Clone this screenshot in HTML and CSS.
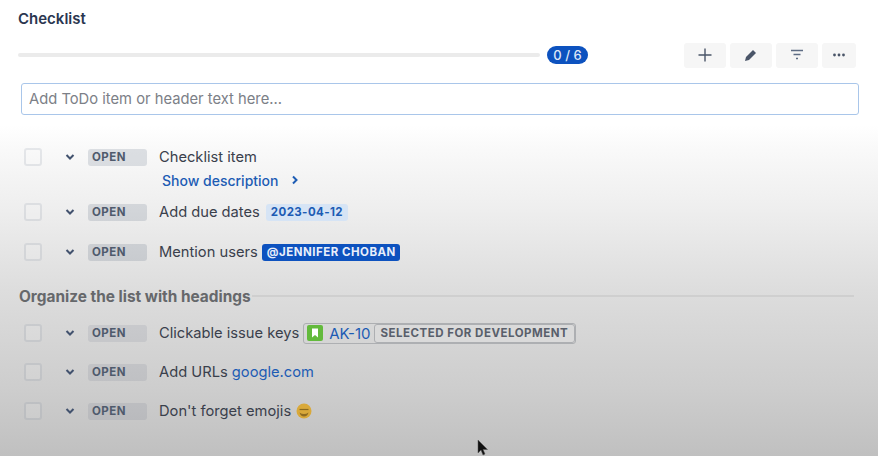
FILE: index.html
```html
<!DOCTYPE html>
<html lang="en">
<head>
<meta charset="utf-8">
<title>Checklist</title>
<link rel="stylesheet" href="styles.css">
</head>
<body>
<main class="panel">
  <h1 class="title">Checklist</h1>
  <div class="toolbar">
    <div class="progress"></div>
    <span class="count">0 / 6</span>
    <div class="actions">
      <button class="act wide"><svg width="16" height="16" viewBox="0 0 16 16"><path d="M8 1.500v13M1.500 8h13" stroke="#4a5568" stroke-width="1.400" fill="none"/></svg></button>
      <button class="act wide"><svg width="16" height="16" viewBox="0 0 16 16"><path d="M2 14l1-4 7-7 3 3-7 7z" fill="#4a5568"/></svg></button>
      <button class="act wide"><svg width="16" height="16" viewBox="0 0 16 16"><path d="M2 3.500h12M4.500 7.500h7M7 11.500h2" stroke="#5e6c84" stroke-width="1.400" fill="none"/></svg></button>
      <button class="act"><svg width="16" height="16" viewBox="0 0 16 16"><circle cx="3.500" cy="8" r="1.400" fill="#4a5568"/><circle cx="8" cy="8" r="1.400" fill="#4a5568"/><circle cx="12.500" cy="8" r="1.400" fill="#4a5568"/></svg></button>
    </div>
  </div>
  <div class="add"><span class="placeholder">Add ToDo item or header text here...</span></div>

  <div class="item first">
    <span class="check"></span>
    <svg class="chev" width="10" height="8" viewBox="0 0 10 8"><path d="M1.500 2l3.500 3.500L8.500 2" stroke="#42526e" stroke-width="2" fill="none"/></svg>
    <span class="status">OPEN</span>
    <span class="text">Checklist item</span>
  </div>
  <div class="desc"><span>Show description</span><svg width="8" height="10" viewBox="0 0 8 10"><path d="M2 1.500L5.500 5 2 8.500" stroke="#1d5cb4" stroke-width="2" fill="none"/></svg></div>

  <div class="item due">
    <span class="check"></span>
    <svg class="chev" width="10" height="8" viewBox="0 0 10 8"><path d="M1.500 2l3.500 3.500L8.500 2" stroke="#42526e" stroke-width="2" fill="none"/></svg>
    <span class="status">OPEN</span>
    <span class="text">Add due dates</span>
    <span class="date">2023-04-12</span>
  </div>
  <div class="item mention-row">
    <span class="check"></span>
    <svg class="chev" width="10" height="8" viewBox="0 0 10 8"><path d="M1.500 2l3.500 3.500L8.500 2" stroke="#42526e" stroke-width="2" fill="none"/></svg>
    <span class="status">OPEN</span>
    <span class="text">Mention users</span>
    <span class="mention">@JENNIFER CHOBAN</span>
  </div>

  <div class="heading"><span>Organize the list with headings</span><i class="rule"></i></div>

  <div class="item after-heading low">
    <span class="check"></span>
    <svg class="chev" width="10" height="8" viewBox="0 0 10 8"><path d="M1.500 2l3.500 3.500L8.500 2" stroke="#42526e" stroke-width="2" fill="none"/></svg>
    <span class="status">OPEN</span>
    <span class="text">Clickable issue keys</span>
    <span class="issue">
      <svg class="issue-icon" width="16" height="16" viewBox="0 0 16 16"><rect width="16" height="16" rx="2" fill="#63ba3c"/><path d="M5 3.500h6v9l-3-2.500-3 2.500z" fill="#fff"/></svg>
      <span class="key">AK-10</span>
      <span class="lozenge">SELECTED FOR DEVELOPMENT</span>
    </span>
  </div>
  <div class="item next low">
    <span class="check"></span>
    <svg class="chev" width="10" height="8" viewBox="0 0 10 8"><path d="M1.500 2l3.500 3.500L8.500 2" stroke="#42526e" stroke-width="2" fill="none"/></svg>
    <span class="status">OPEN</span>
    <span class="text">Add URLs <a class="link">google.com</a></span>
  </div>
  <div class="item next low">
    <span class="check"></span>
    <svg class="chev" width="10" height="8" viewBox="0 0 10 8"><path d="M1.500 2l3.500 3.500L8.500 2" stroke="#42526e" stroke-width="2" fill="none"/></svg>
    <span class="status">OPEN</span>
    <span class="text">Don't forget emojis</span>
    <svg class="emoji" width="16" height="16" viewBox="0 0 16 16"><circle cx="8" cy="8" r="7.500" fill="#d9a93a"/><path d="M3.500 6.500h9" stroke="#8a6a20" stroke-width="1.200"/><path d="M3.500 9.500q4.500 3 9 0q-1 4-4.500 4t-4.500-4z" fill="#8f6c22"/></svg>
  </div>
  <svg class="cursor" width="12" height="18" viewBox="0 0 12 18"><path d="M1 1v13l3-3 2 5 2-1-2-4.500h4.500z" fill="#111" stroke="#555" stroke-width=".5"/></svg>
</main>
</body>
</html>
```

FILE: styles.css
```css
html, body {
  margin: 0;
  height: 100%;
}
body {
  font-family: "Inter", "Liberation Sans", sans-serif;
  overflow: hidden;
}
.panel {
  position: relative;
  box-sizing: border-box;
  width: 878px;
  height: 456px;
  padding: 10px 19px 0 18px;
  background: linear-gradient(to bottom, #fff 0, #fff 125px, #f9f9f9 150px, #eeeeee 210px, #dddddd 290px, #cdcdcd 390px, #c0c0c0 456px);
  color: #3a404c;
}
.title {
  margin: 0;
  font-size: 15px;
  line-height: 17px;
  font-weight: 600;
  color: #2a3650;
}
.toolbar {
  display: flex;
  align-items: center;
  height: 26px;
  margin-top: 15px;
}
.progress {
  width: 522px;
  height: 4px;
  border-radius: 2px;
  background: #ebebeb;
}
.count {
  box-sizing: border-box;
  width: 41px;
  height: 18px;
  margin-left: 7px;
  border-radius: 9px;
  background: #0d52bf;
  color: #dfe8f7;
  font-size: 13px;
  font-weight: 500;
  line-height: 18px;
  text-align: center;
}
.actions {
  display: flex;
  gap: 4px;
  margin-left: 96px;
}
.act {
  display: flex;
  align-items: center;
  justify-content: center;
  width: 34px;
  height: 25px;
  padding: 0;
  border: 0;
  border-radius: 3px;
  background: #f6f6f6;
}
.act.wide {
  width: 42px;
}
.add {
  display: flex;
  align-items: center;
  box-sizing: border-box;
  width: 838px;
  height: 32px;
  margin: 15px 0 0 3px;
  padding-left: 7px;
  border: 1px solid #a9c6ea;
  border-radius: 3px;
  background: #fff;
}
.placeholder {
  font-size: 14.750px;
  color: #7c8087;
}
.item {
  display: flex;
  align-items: center;
  height: 18px;
}
.item.first {
  margin-top: 33px;
}
.item.due {
  margin-top: 14px;
}
.item.mention-row {
  margin-top: 22px;
}
.item.next {
  margin-top: 21px;
}
.item.after-heading {
  margin-top: 19px;
}
.check {
  box-sizing: border-box;
  width: 18px;
  height: 18px;
  margin-left: 6px;
  border: 2px solid rgba(9, 30, 66, 0.09);
  border-radius: 3px;
  background: rgba(255, 255, 255, 0.1);
}
.chev {
  margin-left: 23px;
}
.status {
  box-sizing: border-box;
  width: 59px;
  height: 17px;
  margin-left: 13px;
  padding-left: 4px;
  border-radius: 3px;
  background: rgba(9, 30, 66, 0.12);
  color: #4f5a6c;
  font-size: 11.500px;
  font-weight: 700;
  letter-spacing: .5px;
  line-height: 17px;
}
.low .status {
  background: rgba(9, 30, 66, 0.075);
}
.text {
  margin-left: 12px;
  font-size: 14.700px;
  line-height: 18px;
  white-space: nowrap;
}
.desc {
  display: flex;
  align-items: center;
  gap: 13px;
  height: 18px;
  margin: 5px 0 0 144px;
  color: #1d5cb4;
  font-size: 14px;
  font-weight: 500;
}
.date {
  height: 17px;
  margin-left: 6px;
  padding: 0 5px;
  border-radius: 3px;
  background: #d6e4f5;
  color: #1d5cb4;
  font-size: 11.500px;
  font-weight: 700;
  letter-spacing: .4px;
  line-height: 17px;
}
.mention {
  height: 17px;
  margin-left: 4px;
  padding: 0 4px 0 5px;
  border-radius: 3px;
  background: #0d52bf;
  color: #e8eefa;
  font-size: 11.500px;
  font-weight: 700;
  letter-spacing: .5px;
  line-height: 17px;
  white-space: nowrap;
}
.heading {
  display: flex;
  align-items: center;
  gap: 1px;
  height: 18px;
  margin: 26px 5px 0 1px;
  color: #66686b;
  font-size: 15.400px;
  font-weight: 700;
}
.rule {
  flex: 1;
  height: 2px;
  background: rgba(0, 0, 0, 0.06);
}
.issue {
  display: flex;
  align-items: center;
  box-sizing: border-box;
  height: 21px;
  margin-left: 4px;
  border: 1px solid #adafb2;
  border-radius: 3px;
}
.issue-icon {
  margin-left: 3px;
}
.key {
  margin-left: 6px;
  color: #1d5cb4;
  font-size: 15px;
}
.lozenge {
  box-sizing: border-box;
  height: 19px;
  margin-left: 3px;
  padding: 0 6px;
  border: 1px solid #adafb2;
  border-radius: 3px;
  background: #dadada;
  color: #595f6b;
  font-size: 11.500px;
  font-weight: 700;
  letter-spacing: .5px;
  line-height: 17px;
  white-space: nowrap;
}
.link {
  color: #1d5cb4;
}
.emoji {
  margin-left: 5px;
}
.cursor {
  position: absolute;
  left: 477px;
  top: 439px;
}
```
